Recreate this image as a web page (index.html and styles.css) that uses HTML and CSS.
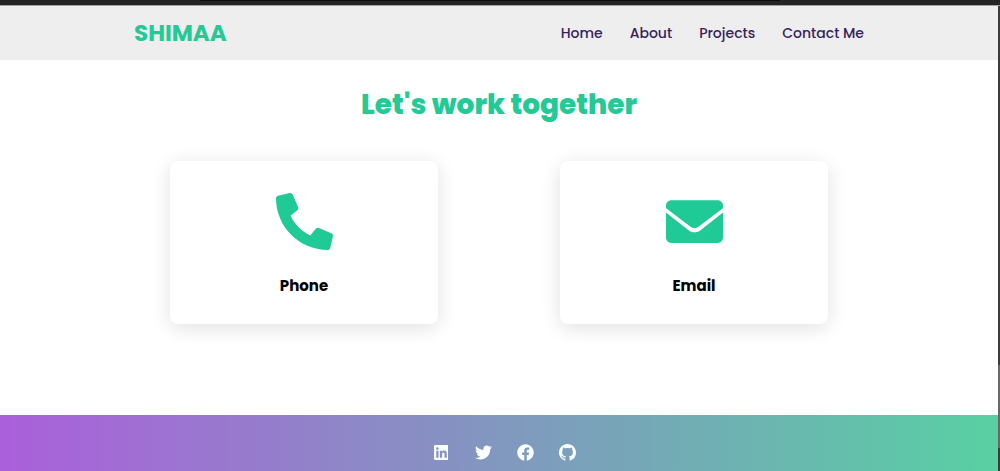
FILE: index.html
```html
<!DOCTYPE html>
<html lang="en">
<head>
<meta charset="utf-8">
<title>Shimaa</title>
<link rel="stylesheet" href="styles.css">
</head>
<body>
<div class="topbar"><div class="notch"></div></div>
<div class="window">
  <div class="page">
    <header class="header">
      <div class="container">
        <a class="logo" href="#">SHIMAA</a>
        <nav class="nav">
          <a href="#">Home</a>
          <a href="#">About</a>
          <a href="#">Projects</a>
          <a href="#">Contact Me</a>
        </nav>
      </div>
    </header>
    <main class="main">
      <h1 class="title">Let's work together</h1>
      <div class="cards">
        <section class="card">
          <svg class="card-icon" viewBox="0 0 512 512" aria-hidden="true"><path transform="matrix(-1 0 0 1 512 0)" d="M493.4 24.6l-104-24c-11.3-2.6-22.9 3.3-27.5 13.9l-48 112c-4.2 9.8-1.4 21.3 6.9 28l60.6 49.6c-36 76.7-98.9 140.5-177.2 177.2l-49.6-60.6c-6.8-8.3-18.2-11.1-28-6.9l-112 48C3.9 366.5-2 378.1.6 389.4l24 104C27.1 504.2 36.7 512 48 512c256.1 0 464-207.5 464-464 0-11.2-7.7-20.9-18.6-23.4z"/></svg>
          <h2 class="card-name">Phone</h2>
        </section>
        <section class="card">
          <svg class="card-icon" viewBox="0 0 512 512" aria-hidden="true"><path d="M464 64H48C21.500 64 0 85.500 0 112v18c0 5 3 9 7 12l213 162c21 16 51 16 72 0l213-162c4-3 7-7 7-12v-18c0-26.500-21.500-48-48-48z"/><path d="M0 176v224c0 26.500 21.500 48 48 48h416c26.500 0 48-21.500 48-48V176L310 334c-32 24-76 24-108 0z"/></svg>
          <h2 class="card-name">Email</h2>
        </section>
      </div>
    </main>
    <footer class="footer">
      <a href="#" aria-label="LinkedIn"><svg viewBox="0 0 448 512"><path d="M416 32H31.900C14.300 32 0 46.500 0 64.300v383.400C0 465.500 14.300 480 31.900 480H416c17.600 0 32-14.500 32-32.300V64.300c0-17.800-14.400-32.300-32-32.300zM135.400 416H69V202.200h66.500V416zm-33.200-243c-21.300 0-38.500-17.300-38.500-38.500S80.900 96 102.200 96c21.200 0 38.500 17.300 38.500 38.500 0 21.300-17.200 38.500-38.500 38.500zm282.100 243h-66.400V312c0-24.800-.5-56.700-34.500-56.700-34.600 0-39.900 27-39.900 54.900V416h-66.400V202.200h63.700v29.200h.9c8.900-16.800 30.600-34.500 62.900-34.500 67.200 0 79.700 44.300 79.700 101.900V416z"/></svg></a>
      <a href="#" aria-label="Twitter"><svg viewBox="0 0 512 512"><path d="M459.370 151.716c.325 4.548.325 9.097.325 13.645 0 138.720-105.583 298.558-298.558 298.558-59.452 0-114.680-17.219-161.137-47.106 8.447.974 16.568 1.299 25.340 1.299 49.055 0 94.213-16.568 130.274-44.832-46.132-.975-84.792-31.188-98.112-72.772 6.498.974 12.995 1.624 19.818 1.624 9.421 0 18.843-1.300 27.614-3.573-48.081-9.747-84.143-51.980-84.143-102.985v-1.299c13.969 7.797 30.214 12.670 47.431 13.319-28.264-18.843-46.781-51.005-46.781-87.391 0-19.492 5.197-37.360 14.294-52.954 51.655 63.675 129.300 105.258 216.365 109.807-1.624-7.797-2.599-15.918-2.599-24.040 0-57.828 46.782-104.934 104.934-104.934 30.213 0 57.502 12.670 76.670 33.137 23.715-4.548 46.456-13.320 66.599-25.340-7.798 24.366-24.366 44.833-46.132 57.827 21.117-2.273 41.584-8.122 60.426-16.243-14.292 20.791-32.161 39.308-52.628 54.253z"/></svg></a>
      <a href="#" aria-label="Facebook"><svg viewBox="0 0 512 512"><path d="M504 256C504 119 393 8 256 8S8 119 8 256c0 123.780 90.690 226.380 209.250 245V327.690h-63V256h63v-54.640c0-62.150 37-96.480 93.670-96.480 27.140 0 55.520 4.840 55.520 4.840v61h-31.280c-30.800 0-40.410 19.120-40.410 38.730V256h68.780l-11 71.690h-57.780V501C413.310 482.380 504 379.780 504 256z"/></svg></a>
      <a href="#" aria-label="GitHub"><svg viewBox="0 0 16 16"><path d="M8 0C3.580 0 0 3.580 0 8c0 3.540 2.290 6.530 5.470 7.590.4.070.55-.17.55-.38 0-.19-.01-.82-.01-1.490-2.010.37-2.530-.49-2.690-.94-.09-.23-.48-.94-.82-1.130-.28-.15-.68-.52-.01-.53.63-.01 1.080.58 1.230.82.72 1.210 1.870.87 2.330.66.07-.52.28-.87.51-1.070-1.780-.2-3.640-.89-3.640-3.950 0-.87.31-1.590.82-2.150-.08-.2-.36-1.020.08-2.120 0 0 .67-.21 2.200.82.64-.18 1.320-.27 2-.27s1.360.09 2 .27c1.530-1.040 2.200-.82 2.200-.82.44 1.100.16 1.920.08 2.120.51.56.82 1.270.82 2.150 0 3.070-1.870 3.750-3.650 3.950.29.25.54.73.54 1.480 0 1.070-.01 1.930-.01 2.200 0 .21.15.46.55.38A8.010 8.010 0 0 0 16 8c0-4.420-3.580-8-8-8z"/></svg></a>
    </footer>
  </div>
  <div class="rail"><div class="thumb"></div></div>
</div>
</body>
</html>
```
FILE: styles.css
```css
* {
  box-sizing: border-box;
}

body {
  display: flex;
  flex-direction: column;
  min-height: 100vh;
  margin: 0;
  background: #fff;
  font-family: Poppins, Inter, "Open Sans", sans-serif;
}

a {
  color: inherit;
  text-decoration: none;
}

.topbar {
  height: 6px;
  background: #242424;
  border-bottom: 1px solid #a0a0a0;
}

.notch {
  width: 58%;
  height: 1px;
  margin-left: 20%;
  background: #0c0c0c;
}

.window {
  display: flex;
  flex: 1;
}

.page {
  display: flex;
  flex: 1;
  flex-direction: column;
}

.rail {
  display: flex;
  flex-direction: column;
  justify-content: flex-end;
  width: 2px;
  padding-bottom: 23px;
  background: #3c3c3c;
}

.thumb {
  height: 83px;
  background: #686868;
}

.header {
  padding: 0 32px;
  background: #eee;
}

.container {
  display: flex;
  align-items: center;
  justify-content: space-between;
  max-width: 730px;
  min-height: 54px;
  margin: 0 auto;
}

.logo {
  color: #23ca95;
  font-size: 23px;
  font-weight: 700;
}

.nav {
  display: flex;
  gap: 27px;
  color: #35225f;
  font-size: 14px;
  font-weight: 500;
}

.main {
  flex: 1;
  padding: 25px 32px 64px;
}

.title {
  margin: 0 0 36px;
  color: #23ca95;
  font-size: 28px;
  font-weight: 800;
  line-height: 40px;
  text-align: center;
}

.cards {
  display: grid;
  grid-template-columns: repeat(2, minmax(0, 268px));
  justify-content: center;
  gap: 122px;
}

.card {
  display: flex;
  flex-direction: column;
  align-items: center;
  gap: 24px;
  padding: 32px 16px 26px;
  border-radius: 8px;
  background: #fff;
  box-shadow: 0 4px 20px rgba(0, 0, 0, 0.12);
}

.card-icon {
  width: 57px;
  height: 57px;
  fill: #20ca96;
}

.card-name {
  margin: 0;
  color: #000;
  font-size: 15px;
  font-weight: 700;
  line-height: 24px;
}

.footer {
  display: flex;
  justify-content: center;
  gap: 25px;
  padding: 29px 0 10px 10px;
  background: linear-gradient(90deg, #ab5fdb, #58d0a3);
}

.footer a {
  display: flex;
  justify-content: center;
  width: 17px;
}

.footer svg {
  height: 17px;
  fill: #f8fdff;
}
```
